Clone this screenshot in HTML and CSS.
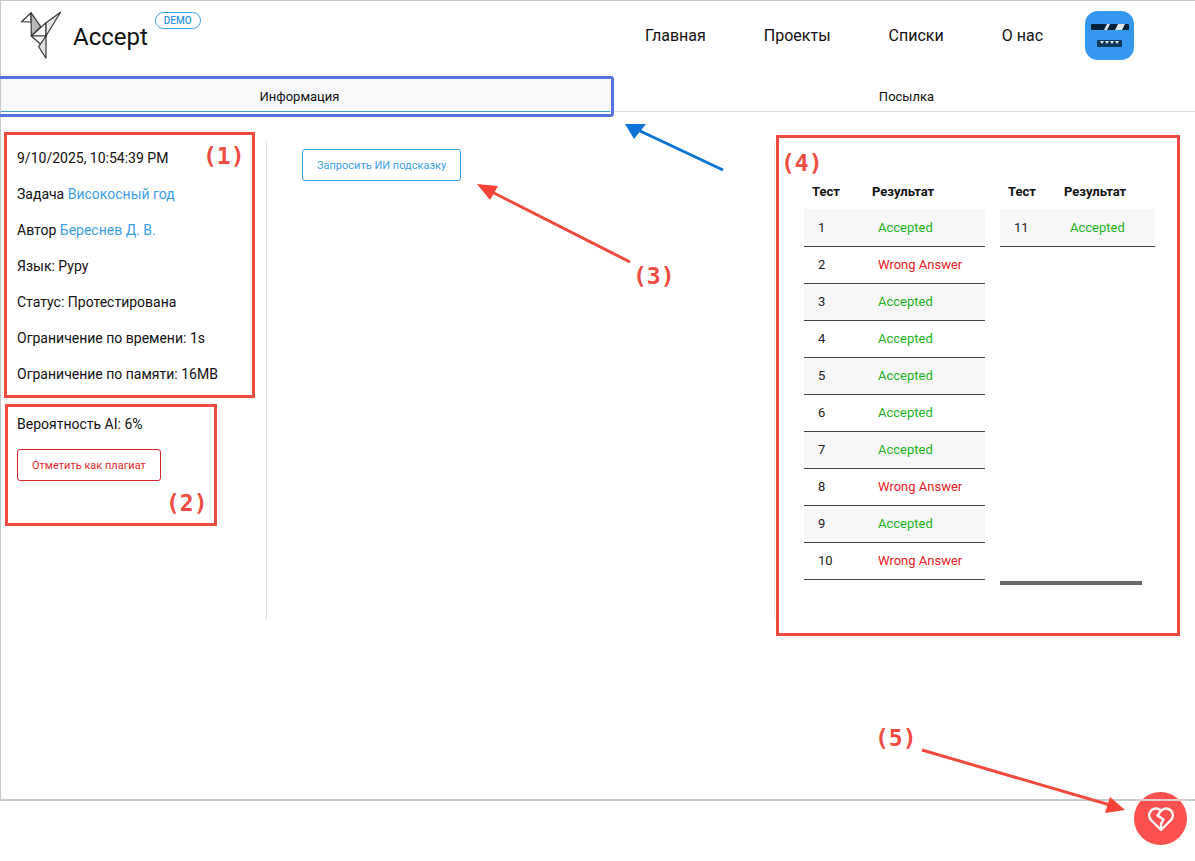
FILE: index.html
```html
<!DOCTYPE html>
<html lang="ru">
<head>
    <meta charset="UTF-8">
    <title>Accept</title>
    <meta name="viewport" content="width=device-width, initial-scale=1.0">
    <link rel="stylesheet" href="styles.css">
</head>
<body>
    <div class="page">
        <header class="header">
            <a href="#" class="brand">
                <svg class="logo" viewBox="0 0 44 52" fill="none" stroke="#3a3a3a" stroke-width="1.2" stroke-linejoin="round">
                    <path d="M2.5 12.7 L12 3.7 L12 13 Z" fill="#fff"/>
                    <path d="M12 3.7 L21.7 17.7 L12.3 27 Z" fill="#b8b8b8"/>
                    <path d="M12.3 27 L27 13.7 L27 27 Z" fill="#fff"/>
                    <path d="M41.5 3.2 L27 13.7 L27 27 Z" fill="#e8e8e8"/>
                    <path d="M12.3 27 L27 27 L21.7 35.3 Z" fill="#fff"/>
                    <path d="M27 27 L19.7 37.7 L27 49.3 Z" fill="#e0e0e0"/>
                </svg>
                <span class="brand-name">Accept</span>
                <span class="badge">DEMO</span>
            </a>
            <nav class="nav">
                <a href="#">Главная</a>
                <a href="#">Проекты</a>
                <a href="#">Списки</a>
                <a href="#">О нас</a>
                <a href="#" class="avatar" aria-label="Профиль">
                    <svg viewBox="0 0 49 49">
                        <rect width="49" height="49" rx="13" fill="#3398ee"/>
                        <rect x="6" y="13" width="38" height="6" rx="1" fill="#06213a"/>
                        <path d="M22 13h3l-3 6h-3z M33 13h7l-3 6h-7z" fill="#dfe6ec"/>
                        <rect x="12" y="29" width="25" height="7" rx="1" fill="#0b365c"/>
                        <path d="M15 30h4l-2 3z M20 30h4l-2 3z M25 30h4l-2 3z M30 30h4l-2 3z" fill="#e8eef3"/>
                    </svg>
                </a>
            </nav>
        </header>

        <div class="tabs">
            <button class="tab active">Информация</button>
            <button class="tab">Посылка</button>
        </div>

        <main class="content">
            <aside class="info">
                <p>9/10/2025, 10:54:39 PM</p>
                <p>Задача <a href="#">Високосный год</a></p>
                <p>Автор <a href="#">Береснев Д. В.</a></p>
                <p>Язык: Pypy</p>
                <p>Статус: Протестирована</p>
                <p>Ограничение по времени: 1s</p>
                <p>Ограничение по памяти: 16MB</p>
                <div class="ai">
                    <p>Вероятность AI: 6%</p>
                    <button class="btn btn-red">Отметить как плагиат</button>
                </div>
            </aside>

            <section class="hint">
                <button class="btn btn-blue">Запросить ИИ подсказку</button>
            </section>

            <section class="results">
                <table class="tests">
                    <thead><tr><th>Тест</th><th>Результат</th></tr></thead>
                    <tbody>
                        <tr><td>1</td><td class="ok">Accepted</td></tr>
                        <tr><td>2</td><td class="fail">Wrong Answer</td></tr>
                        <tr><td>3</td><td class="ok">Accepted</td></tr>
                        <tr><td>4</td><td class="ok">Accepted</td></tr>
                        <tr><td>5</td><td class="ok">Accepted</td></tr>
                        <tr><td>6</td><td class="ok">Accepted</td></tr>
                        <tr><td>7</td><td class="ok">Accepted</td></tr>
                        <tr><td>8</td><td class="fail">Wrong Answer</td></tr>
                        <tr><td>9</td><td class="ok">Accepted</td></tr>
                        <tr><td>10</td><td class="fail">Wrong Answer</td></tr>
                    </tbody>
                </table>
                <div class="tests-next">
                    <table class="tests tests-short">
                        <thead><tr><th>Тест</th><th>Результат</th></tr></thead>
                        <tbody>
                            <tr><td>11</td><td class="ok">Accepted</td></tr>
                        </tbody>
                    </table>
                    <div class="scroll-thumb"></div>
                </div>
            </section>
        </main>
    </div>

    <button class="heart" aria-label="Поддержать">
        <svg viewBox="0 0 28 26" fill="none" stroke="#fff" stroke-width="2.4" stroke-linejoin="round" stroke-linecap="round">
            <path d="M14 24 L4 14 A6.6 6.6 0 0 1 14 4.6 A6.6 6.6 0 0 1 24 14 Z"/>
            <path d="M14 4.6 L10.5 9.5 L16.5 13.5 L14 18 V23"/>
        </svg>
    </button>

    <!-- callouts over the page -->
    <div class="notes">
        <div class="mark mark-tab"></div>
        <div class="mark mark-info"></div>
        <div class="mark mark-ai"></div>
        <div class="mark mark-results"></div>
        <span class="num num-1">(1)</span>
        <span class="num num-2">(2)</span>
        <span class="num num-3">(3)</span>
        <span class="num num-4">(4)</span>
        <span class="num num-5">(5)</span>
        <svg class="arrows" width="1195" height="861">
            <g stroke="#0b74d4" fill="#0b74d4">
                <line x1="723" y1="170" x2="638" y2="130" stroke-width="3"/>
                <path d="M625 124 L646 124 L634 139 Z" stroke="none"/>
            </g>
            <g stroke="#f24a3d" fill="#fb4236">
                <line x1="630" y1="262" x2="490" y2="191" stroke-width="3"/>
                <path d="M477 184 L498 186 L490 200 Z" stroke="none"/>
                <line x1="922" y1="750" x2="1110" y2="805" stroke-width="3"/>
                <path d="M1125 810 L1110 797 L1105 813 Z" stroke="none"/>
            </g>
        </svg>
    </div>
</body>
</html>
```
FILE: styles.css
```css
* {
    box-sizing: border-box;
}
body {
    margin: 0;
    min-height: 100vh;
    position: relative;
    background: #fff;
    color: #111;
    font-family: Roboto, "Open Sans", sans-serif;
    font-size: 14px;
}
a {
    color: #3b9fe6;
    text-decoration: none;
}
button {
    font-family: inherit;
    cursor: pointer;
}
.page {
    min-height: calc(100vh - 60px);
    border: 1px solid #c8c8c8;
    border-right: none;
    border-bottom: 2px solid #c8cccc;
}

/* header */
.header {
    display: flex;
    justify-content: space-between;
    height: 77px;
    padding: 8px 61px 0 18px;
}
.brand {
    display: flex;
    align-items: flex-start;
    color: #111;
}
.logo {
    width: 44px;
    height: 52px;
}
.brand-name {
    margin-left: 10px;
    font-size: 24px;
    line-height: 56px;
}
.badge {
    margin: 3px 0 0 7px;
    padding: 0 8px;
    border: 1px solid #3b9fe6;
    border-radius: 9px;
    color: #2f97e4;
    font-size: 10px;
    font-weight: 500;
    line-height: 15px;
}
.nav {
    display: flex;
    gap: 58px;
    font-size: 16px;
    line-height: 54px;
}
.nav a {
    color: #111;
}
.nav .avatar {
    width: 49px;
    height: 49px;
    margin: 2px 0 0 -16px;
}
.avatar svg {
    display: block;
}

/* tabs */
.tabs {
    display: flex;
    border-bottom: 1px solid #dcdfe0;
}
.tab {
    flex: 1;
    height: 33px;
    padding: 4px 0 0 8px;
    border: none;
    background: none;
    color: #111;
    font-size: 13px;
}
.tab.active {
    flex: 0 0 51%;
    margin-bottom: -1px;
    padding: 4px 12px 0 0;
    height: 34px;
    background: #f7f9fa;
    border-bottom: 1px solid #3a9cc8;
}

/* content */
.content {
    display: grid;
    grid-template-columns: 266px 1fr 421px;
    min-height: 478px;
    margin-top: 30px;
}
.info {
    padding: 6px 16px;
    border-right: 1px solid #e0e0e0;
}
.info p {
    margin: 0 0 16px;
    line-height: 20px;
}
.ai {
    margin-top: 30px;
}
.ai p {
    margin-bottom: 15px;
}
.btn {
    height: 32px;
    padding: 0 14px;
    border: 1px solid;
    border-radius: 3px;
    background: #fff;
    font-size: 11px;
}
.btn-red {
    border-color: #cf2b2b;
    color: #e62a2a;
}
.btn-blue {
    border-color: #3b9fe6;
    color: #3b9fe6;
}
.hint {
    padding: 7px 35px;
}
.results {
    display: flex;
    align-items: flex-start;
    gap: 15px;
    padding: 31px 29px;
    border-left: 1px solid #e8e8e8;
}
.tests {
    width: 181px;
    border-collapse: collapse;
    table-layout: fixed;
    font-size: 13px;
    text-align: left;
}
.tests th {
    height: 36px;
    padding: 0 8px;
    font-weight: 700;
}
.tests th:first-child {
    width: 60px;
}
.tests td {
    height: 37px;
    padding: 0 0 0 14px;
    border-bottom: 1px solid #444;
    color: #222;
}
.tests tbody tr:nth-child(odd) {
    background: #f7f7f7;
}
.tests .ok {
    color: #22b322;
}
.tests .fail {
    color: #ea2020;
}
.tests-next {
    display: flex;
    flex-direction: column;
    justify-content: space-between;
    height: 412px;
}
.tests-short {
    width: 155px;
}
.tests-short th:first-child {
    width: 56px;
}
.scroll-thumb {
    width: 142px;
    height: 4px;
    background: #6a6a6a;
}

/* round button in the corner */
.heart {
    position: absolute;
    right: 8px;
    bottom: 16px;
    width: 53px;
    height: 53px;
    padding: 0;
    border: none;
    border-radius: 50%;
    background: #ff5050;
}
.heart::before {
    content: "";
    position: absolute;
    left: 2px;
    right: 2px;
    top: 7px;
    height: 2px;
    background: #e0cccc;
}
.heart svg {
    display: block;
    width: 28px;
    height: 26px;
    margin: 0 auto;
}

/* callouts */
.notes {
    position: absolute;
    top: 0;
    left: 0;
    width: 100%;
    height: 100%;
    overflow: hidden;
    pointer-events: none;
}
.arrows {
    position: absolute;
    top: 0;
    left: 0;
}
.mark {
    position: absolute;
    border: 3px solid #f04b40;
}
.mark-tab {
    left: -3px;
    top: 76px;
    width: 617px;
    height: 41px;
    border-color: #5873e0;
    border-radius: 3px;
}
.mark-info {
    left: 4px;
    top: 132px;
    width: 251px;
    height: 266px;
}
.mark-ai {
    left: 5px;
    top: 404px;
    width: 212px;
    height: 122px;
}
.mark-results {
    left: 776px;
    top: 135px;
    width: 404px;
    height: 501px;
}
.num {
    position: absolute;
    color: #f04b40;
    font-family: "DejaVu Sans Mono", monospace;
    font-size: 23px;
    font-weight: 700;
    line-height: 28px;
}
.num-1 {
    left: 203px;
    top: 142px;
}
.num-2 {
    left: 166px;
    top: 489px;
}
.num-3 {
    left: 633px;
    top: 262px;
}
.num-4 {
    left: 781px;
    top: 149px;
}
.num-5 {
    left: 875px;
    top: 724px;
}
```
